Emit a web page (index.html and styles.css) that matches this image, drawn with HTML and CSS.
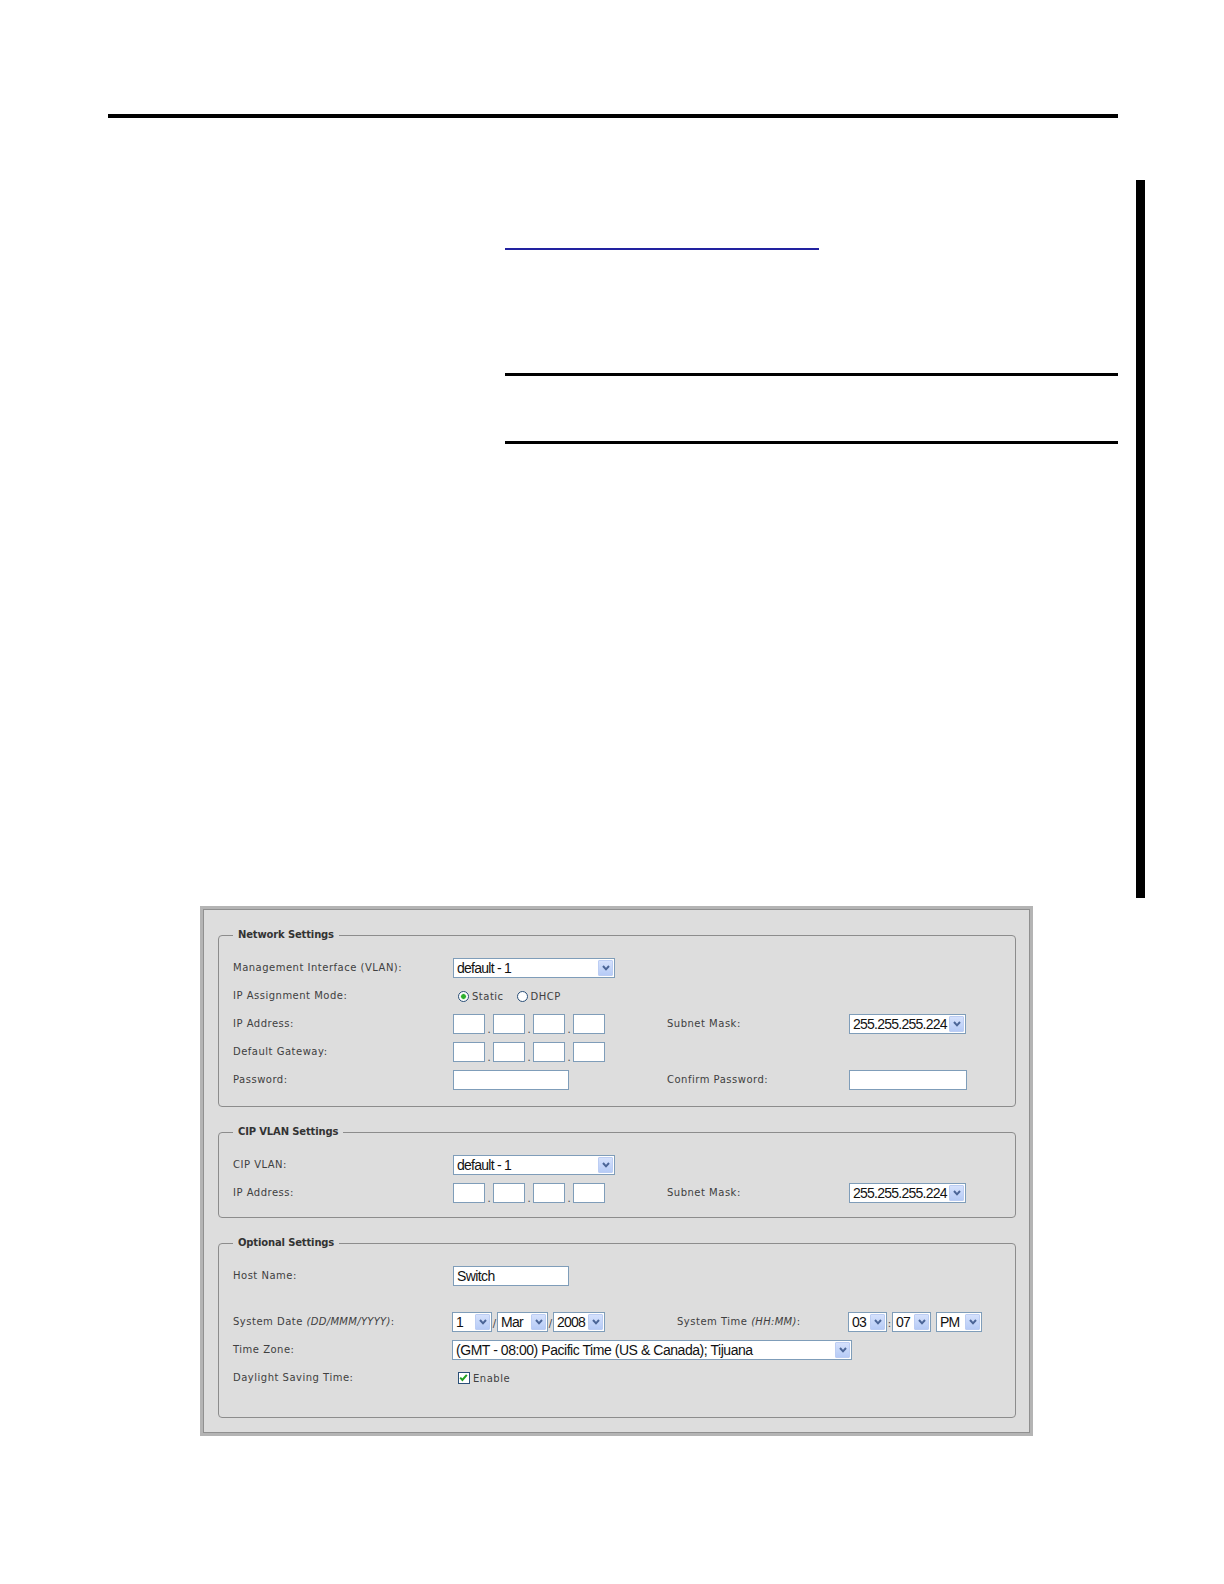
FILE: index.html
```html
<!DOCTYPE html>
<html lang="en">
<head>
<meta charset="utf-8">
<title>Express Setup</title>
<link rel="stylesheet" href="styles.css">
</head>
<body>
<div class="page">
  <div class="top-rule"></div>

  <div class="upper">
    <div class="text-col">
      <a class="link-line" href="#"></a>
      <div class="rule rule-1"></div>
      <div class="rule rule-2"></div>
    </div>
    <div class="tab"></div>
  </div>

  <div class="figure">
    <div class="panel">

      <fieldset class="fs fs-net">
        <legend>Network Settings</legend>
        <div class="rows">
          <div class="row">
            <span class="lbl">Management Interface (VLAN):</span>
            <div class="select w162"><span class="sel-text">default - 1</span><span class="sel-btn"><svg viewBox="0 0 8 6" width="8" height="6"><polyline points="1,1 4,4.3 7,1"/></svg></span></div>
          </div>
          <div class="row">
            <span class="lbl">IP Assignment Mode:</span>
            <div class="choices">
              <span class="radio on"></span><span class="opt">Static</span>
              <span class="radio second"></span><span class="opt">DHCP</span>
            </div>
          </div>
          <div class="row">
            <span class="lbl">IP Address:</span>
            <div class="ip"><input class="oct" type="text"><span class="dot">.</span><input class="oct" type="text"><span class="dot">.</span><input class="oct" type="text"><span class="dot">.</span><input class="oct" type="text"></div>
            <span class="lbl">Subnet Mask:</span>
            <div class="select w117"><span class="sel-text">255.255.255.224</span><span class="sel-btn"><svg viewBox="0 0 8 6" width="8" height="6"><polyline points="1,1 4,4.3 7,1"/></svg></span></div>
          </div>
          <div class="row">
            <span class="lbl">Default Gateway:</span>
            <div class="ip"><input class="oct" type="text"><span class="dot">.</span><input class="oct" type="text"><span class="dot">.</span><input class="oct" type="text"><span class="dot">.</span><input class="oct" type="text"></div>
          </div>
          <div class="row">
            <span class="lbl">Password:</span>
            <input class="field w116" type="password">
            <span class="lbl">Confirm Password:</span>
            <input class="field w118" type="password">
          </div>
        </div>
      </fieldset>

      <fieldset class="fs fs-cip">
        <legend>CIP VLAN Settings</legend>
        <div class="rows">
          <div class="row">
            <span class="lbl">CIP VLAN:</span>
            <div class="select w162"><span class="sel-text">default - 1</span><span class="sel-btn"><svg viewBox="0 0 8 6" width="8" height="6"><polyline points="1,1 4,4.3 7,1"/></svg></span></div>
          </div>
          <div class="row">
            <span class="lbl">IP Address:</span>
            <div class="ip"><input class="oct" type="text"><span class="dot">.</span><input class="oct" type="text"><span class="dot">.</span><input class="oct" type="text"><span class="dot">.</span><input class="oct" type="text"></div>
            <span class="lbl">Subnet Mask:</span>
            <div class="select w117"><span class="sel-text">255.255.255.224</span><span class="sel-btn"><svg viewBox="0 0 8 6" width="8" height="6"><polyline points="1,1 4,4.3 7,1"/></svg></span></div>
          </div>
        </div>
      </fieldset>

      <fieldset class="fs fs-opt">
        <legend>Optional Settings</legend>
        <div class="rows">
          <div class="row">
            <span class="lbl">Host Name:</span>
            <input class="field w116 shift" type="text" value="Switch">
          </div>
          <div class="row spaced">
            <span class="lbl">System Date <i>(DD/MMM/YYYY)</i>:</span>
            <div class="group shift">
              <div class="select w40"><span class="sel-text">1</span><span class="sel-btn"><svg viewBox="0 0 8 6" width="8" height="6"><polyline points="1,1 4,4.3 7,1"/></svg></span></div>
              <span class="sep">/</span>
              <div class="select w51"><span class="sel-text">Mar</span><span class="sel-btn"><svg viewBox="0 0 8 6" width="8" height="6"><polyline points="1,1 4,4.3 7,1"/></svg></span></div>
              <span class="sep">/</span>
              <div class="select w52"><span class="sel-text">2008</span><span class="sel-btn"><svg viewBox="0 0 8 6" width="8" height="6"><polyline points="1,1 4,4.3 7,1"/></svg></span></div>
            </div>
            <span class="lbl indent">System Time <i>(HH:MM)</i>:</span>
            <div class="group shift">
              <div class="select w39"><span class="sel-text">03</span><span class="sel-btn"><svg viewBox="0 0 8 6" width="8" height="6"><polyline points="1,1 4,4.3 7,1"/></svg></span></div>
              <span class="sep">:</span>
              <div class="select w39"><span class="sel-text">07</span><span class="sel-btn"><svg viewBox="0 0 8 6" width="8" height="6"><polyline points="1,1 4,4.3 7,1"/></svg></span></div>
              <span class="sep"></span>
              <div class="select w46"><span class="sel-text">PM</span><span class="sel-btn"><svg viewBox="0 0 8 6" width="8" height="6"><polyline points="1,1 4,4.3 7,1"/></svg></span></div>
            </div>
          </div>
          <div class="row">
            <span class="lbl">Time Zone:</span>
            <div class="select w400 span3 shift"><span class="sel-text loose">(GMT - 08:00) Pacific Time (US &amp; Canada); Tijuana</span><span class="sel-btn"><svg viewBox="0 0 8 6" width="8" height="6"><polyline points="1,1 4,4.3 7,1"/></svg></span></div>
          </div>
          <div class="row">
            <span class="lbl">Daylight Saving Time:</span>
            <div class="choices">
              <span class="check"><svg viewBox="0 0 11 11" width="11" height="11"><path d="M2.2 5.6 L4.4 7.9 L8.8 2.8"/></svg></span><span class="opt">Enable</span>
            </div>
          </div>
        </div>
      </fieldset>

    </div>
  </div>
</div>
</body>
</html>
```

FILE: styles.css
```css
html, body {
  margin: 0;
  padding: 0;
  background: #ffffff;
}

.page {
  width: 1224px;
  padding-top: 114px;
  padding-bottom: 148px;
}

.top-rule {
  margin-left: 108px;
  width: 1010px;
  height: 4px;
  background: #000;
}

.upper {
  display: flex;
  margin-top: 62px;
}

.text-col {
  margin-left: 505px;
  width: 613px;
  display: flex;
  flex-direction: column;
}

.link-line {
  display: block;
  margin-top: 68px;
  width: 314px;
  height: 2px;
  background: #2222a0;
}

.rule {
  height: 3px;
  background: #000;
}

.rule-1 { margin-top: 123px; }
.rule-2 { margin-top: 65px; }

.tab {
  margin-left: 18px;
  width: 9px;
  height: 718px;
  background: #000;
}

/* ---------- screenshot panel ---------- */

.figure {
  margin: 8px 0 0 200px;
  width: 833px;
}

.panel {
  box-sizing: border-box;
  width: 833px;
  background: #dddddd;
  border: 3px solid #b4b4b4;
  box-shadow: inset 0 0 0 1px #909090;
  padding: 20px 14px 15px 15px;
  display: flex;
  flex-direction: column;
  gap: 19px;
}

.fs {
  margin: 0;
  min-width: 0;
  border: 1px solid #8c8c8c;
  border-radius: 4px;
  padding: 16px 0 14px 14px;
}

.fs-net { padding-bottom: 15px; }
.fs-cip { padding-bottom: 13px; }
.fs-opt { padding-bottom: 28px; }

.fs legend {
  padding: 0 5px;
  font-family: "DejaVu Sans", Verdana, sans-serif;
  font-weight: bold;
  font-size: 10px;
  line-height: 12px;
  letter-spacing: -0.15px;
  color: #333333;
}

.rows {
  display: flex;
  flex-direction: column;
  gap: 6px;
}

.row {
  display: grid;
  grid-template-columns: 220px 214px 182px 1fr;
  align-items: center;
  height: 22px;
}

.row.spaced { margin-top: 18px; }

.lbl {
  font-family: "DejaVu Sans", Verdana, sans-serif;
  font-size: 10px;
  line-height: 12px;
  letter-spacing: 0.5px;
  color: #404040;
  white-space: nowrap;
}

.lbl i {
  font-style: italic;
  letter-spacing: 0.3px;
}

.lbl.indent { padding-left: 10px; }

/* select look-alike */
.select {
  box-sizing: border-box;
  display: flex;
  align-items: center;
  height: 20px;
  border: 1px solid #7f9db9;
  background: #ffffff;
}

.sel-text {
  flex: 1;
  min-width: 0;
  padding-left: 3px;
  font-family: "Liberation Sans", Arial, sans-serif;
  font-size: 14px;
  line-height: 18px;
  letter-spacing: -0.75px;
  color: #111;
  white-space: nowrap;
  overflow: hidden;
}

.sel-text.loose { letter-spacing: -0.45px; }

.sel-btn {
  box-sizing: border-box;
  flex: none;
  width: 15px;
  height: 16px;
  margin-right: 1px;
  border: 1px solid #bccdf3;
  border-radius: 1px;
  background: linear-gradient(#d5e1fc, #b6cbf6);
  display: flex;
  align-items: center;
  justify-content: center;
}

.sel-btn svg polyline {
  fill: none;
  stroke: #4b6597;
  stroke-width: 2;
}

.w162 { width: 162px; }
.w117 { width: 117px; }
.w40 { width: 40px; }
.w51 { width: 51px; }
.w52 { width: 52px; }
.w39 { width: 39px; }
.w46 { width: 46px; }
.w400 { width: 400px; }
.w116 { width: 116px; }
.w118 { width: 118px; }

.span3 { grid-column: 2 / 5; }
.shift { margin-left: -1px; }

/* text inputs */
.field, .oct {
  box-sizing: border-box;
  height: 20px;
  margin: 0;
  border: 1px solid #7f9db9;
  background: #ffffff;
  padding: 0 3px;
  font-family: "Liberation Sans", Arial, sans-serif;
  font-size: 14px;
  letter-spacing: -0.6px;
  color: #111;
  outline: none;
}

.oct { width: 32px; }

.ip {
  display: flex;
  align-items: flex-end;
}

.dot {
  width: 8px;
  text-align: center;
  font-family: "DejaVu Sans", sans-serif;
  font-size: 10px;
  line-height: 8px;
  color: #444;
}

.group {
  display: flex;
  align-items: center;
}

.sep {
  width: 5px;
  text-align: center;
  font-family: "DejaVu Sans", sans-serif;
  font-size: 10px;
  line-height: 12px;
  padding-top: 4px;
  color: #444;
}

/* radio & checkbox */
.choices {
  display: flex;
  align-items: center;
  padding-left: 5px;
}

.radio {
  box-sizing: border-box;
  width: 11px;
  height: 11px;
  border: 1px solid #2a4f78;
  border-radius: 50%;
  background: #ffffff;
}

.radio.on {
  background: radial-gradient(circle, #2db02d 0, #2db02d 2px, #bfe8bf 2.6px, #ffffff 3.4px);
}

.radio.second { margin-left: 13px; }

.opt {
  margin-left: 3px;
  padding-top: 2px;
  font-family: "DejaVu Sans", Verdana, sans-serif;
  font-size: 10px;
  line-height: 12px;
  letter-spacing: 0.5px;
  color: #404040;
}

.check {
  box-sizing: border-box;
  width: 12px;
  height: 12px;
  border: 1px solid #2a4f78;
  background: #ffffff;
  display: flex;
}

.check svg {
  margin: -1px 0 0 -1px;
}

.check svg path {
  fill: none;
  stroke: #21a121;
  stroke-width: 2;
}
```
